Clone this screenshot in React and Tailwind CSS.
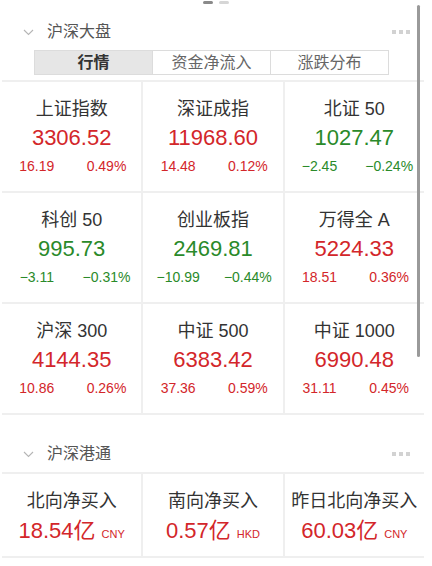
import React from "react";

const font = { fontFamily: '"Liberation Sans", "Noto Sans CJK SC", sans-serif' };

const indices = [
  { name: "上证指数", value: "3306.52", chg: "16.19", pct: "0.49%", up: true },
  { name: "深证成指", value: "11968.60", chg: "14.48", pct: "0.12%", up: true },
  { name: "北证 50", value: "1027.47", chg: "−2.45", pct: "−0.24%", up: false },
  { name: "科创 50", value: "995.73", chg: "−3.11", pct: "−0.31%", up: false },
  { name: "创业板指", value: "2469.81", chg: "−10.99", pct: "−0.44%", up: false },
  { name: "万得全 A", value: "5224.33", chg: "18.51", pct: "0.36%", up: true },
  { name: "沪深 300", value: "4144.35", chg: "10.86", pct: "0.26%", up: true },
  { name: "中证 500", value: "6383.42", chg: "37.36", pct: "0.59%", up: true },
  { name: "中证 1000", value: "6990.48", chg: "31.11", pct: "0.45%", up: true },
];

const flows = [
  { name: "北向净买入", value: "18.54", unit: "CNY" },
  { name: "南向净买入", value: "0.57", unit: "HKD" },
  { name: "昨日北向净买入", value: "60.03", unit: "CNY" },
];

const Chevron = () => (
  <svg width="11" height="7" viewBox="0 0 11 7" className="shrink-0">
    <path d="M1 1 L5.5 5.5 L10 1" fill="none" stroke="#b5b5b5" strokeWidth="1.1" />
  </svg>
);

const Dots = () => (
  <div className="flex gap-[3px]">
    <span className="w-[4px] h-[4px] bg-[#d2d2d2]"></span>
    <span className="w-[4px] h-[4px] bg-[#d2d2d2]"></span>
    <span className="w-[4px] h-[4px] bg-[#d2d2d2]"></span>
  </div>
);

const SectionHeader = ({ title }) => (
  <div className="flex items-center h-[24px] pl-[23px] pr-[22px]">
    <Chevron />
    <span className="ml-[13px] text-[16px] text-[#555]">{title}</span>
    <div className="ml-auto">
      <Dots />
    </div>
  </div>
);

export default function App() {
  return (
    <div className="relative w-[432px] h-[566px] bg-white overflow-hidden" style={font}>
      {/* page dots */}
      <div className="flex justify-center gap-[6px] pt-[1px] h-[5px]">
        <span className="w-[10px] h-[3px] rounded-full bg-[#8a8a8a]"></span>
        <span className="w-[10px] h-[3px] rounded-full bg-[#d6d6d6]"></span>
      </div>

      {/* scrollbar */}
      <div className="absolute left-[417px] top-[5px] w-[3px] h-[352px] rounded-full bg-[#9a9a9a]"></div>

      <div className="pt-[15px]">
        <SectionHeader title="沪深大盘" />
      </div>

      {/* tabs */}
      <div className="mt-[6px] ml-[34px] w-[355px] h-[25px] flex border border-[#dcdcdc] text-[16px]">
        <div className="flex-1 flex items-center justify-center bg-[#e6e6e6] text-[#333] font-semibold">行情</div>
        <div className="flex-1 flex items-center justify-center border-l border-[#dcdcdc] text-[#666]">资金净流入</div>
        <div className="flex-1 flex items-center justify-center border-l border-[#dcdcdc] text-[#666]">涨跌分布</div>
      </div>

      {/* index grid */}
      <div className="mt-[5px] ml-[2px] w-[422px] grid grid-cols-3 gap-[2px] py-[2px] bg-[#efefef]">
        {indices.map((it) => {
          const color = it.up ? "text-[#d3262a]" : "text-[#2a8a2a]";
          return (
            <div key={it.name} className="bg-white h-[109px] flex flex-col items-center pt-[16px]">
              <div className="text-[18px] leading-[22px] text-[#333]">{it.name}</div>
              <div className={`mt-[5px] text-[22px] leading-[26px] ${color}`}>{it.value}</div>
              <div className={`mt-[6px] w-full grid grid-cols-2 text-center text-[14px] leading-[18px] ${color}`}>
                <span>{it.chg}</span>
                <span>{it.pct}</span>
              </div>
            </div>
          );
        })}
      </div>

      <div className="pt-[27px]">
        <SectionHeader title="沪深港通" />
      </div>

      {/* flows */}
      <div className="mt-[6px] ml-[2px] w-[422px] grid grid-cols-3 gap-[2px] py-[2px] bg-[#efefef]">
        {flows.map((f) => (
          <div key={f.name} className="bg-white h-[82px] flex flex-col items-center pt-[16px]">
            <div className="text-[18px] leading-[22px] text-[#333]">{f.name}</div>
            <div className="mt-[6px] flex items-baseline text-[#d3262a]">
              <span className="text-[22px] leading-[26px]">{f.value}亿</span>
              <span className="ml-[6px] text-[11px]">{f.unit}</span>
            </div>
          </div>
        ))}
      </div>
    </div>
  );
}
